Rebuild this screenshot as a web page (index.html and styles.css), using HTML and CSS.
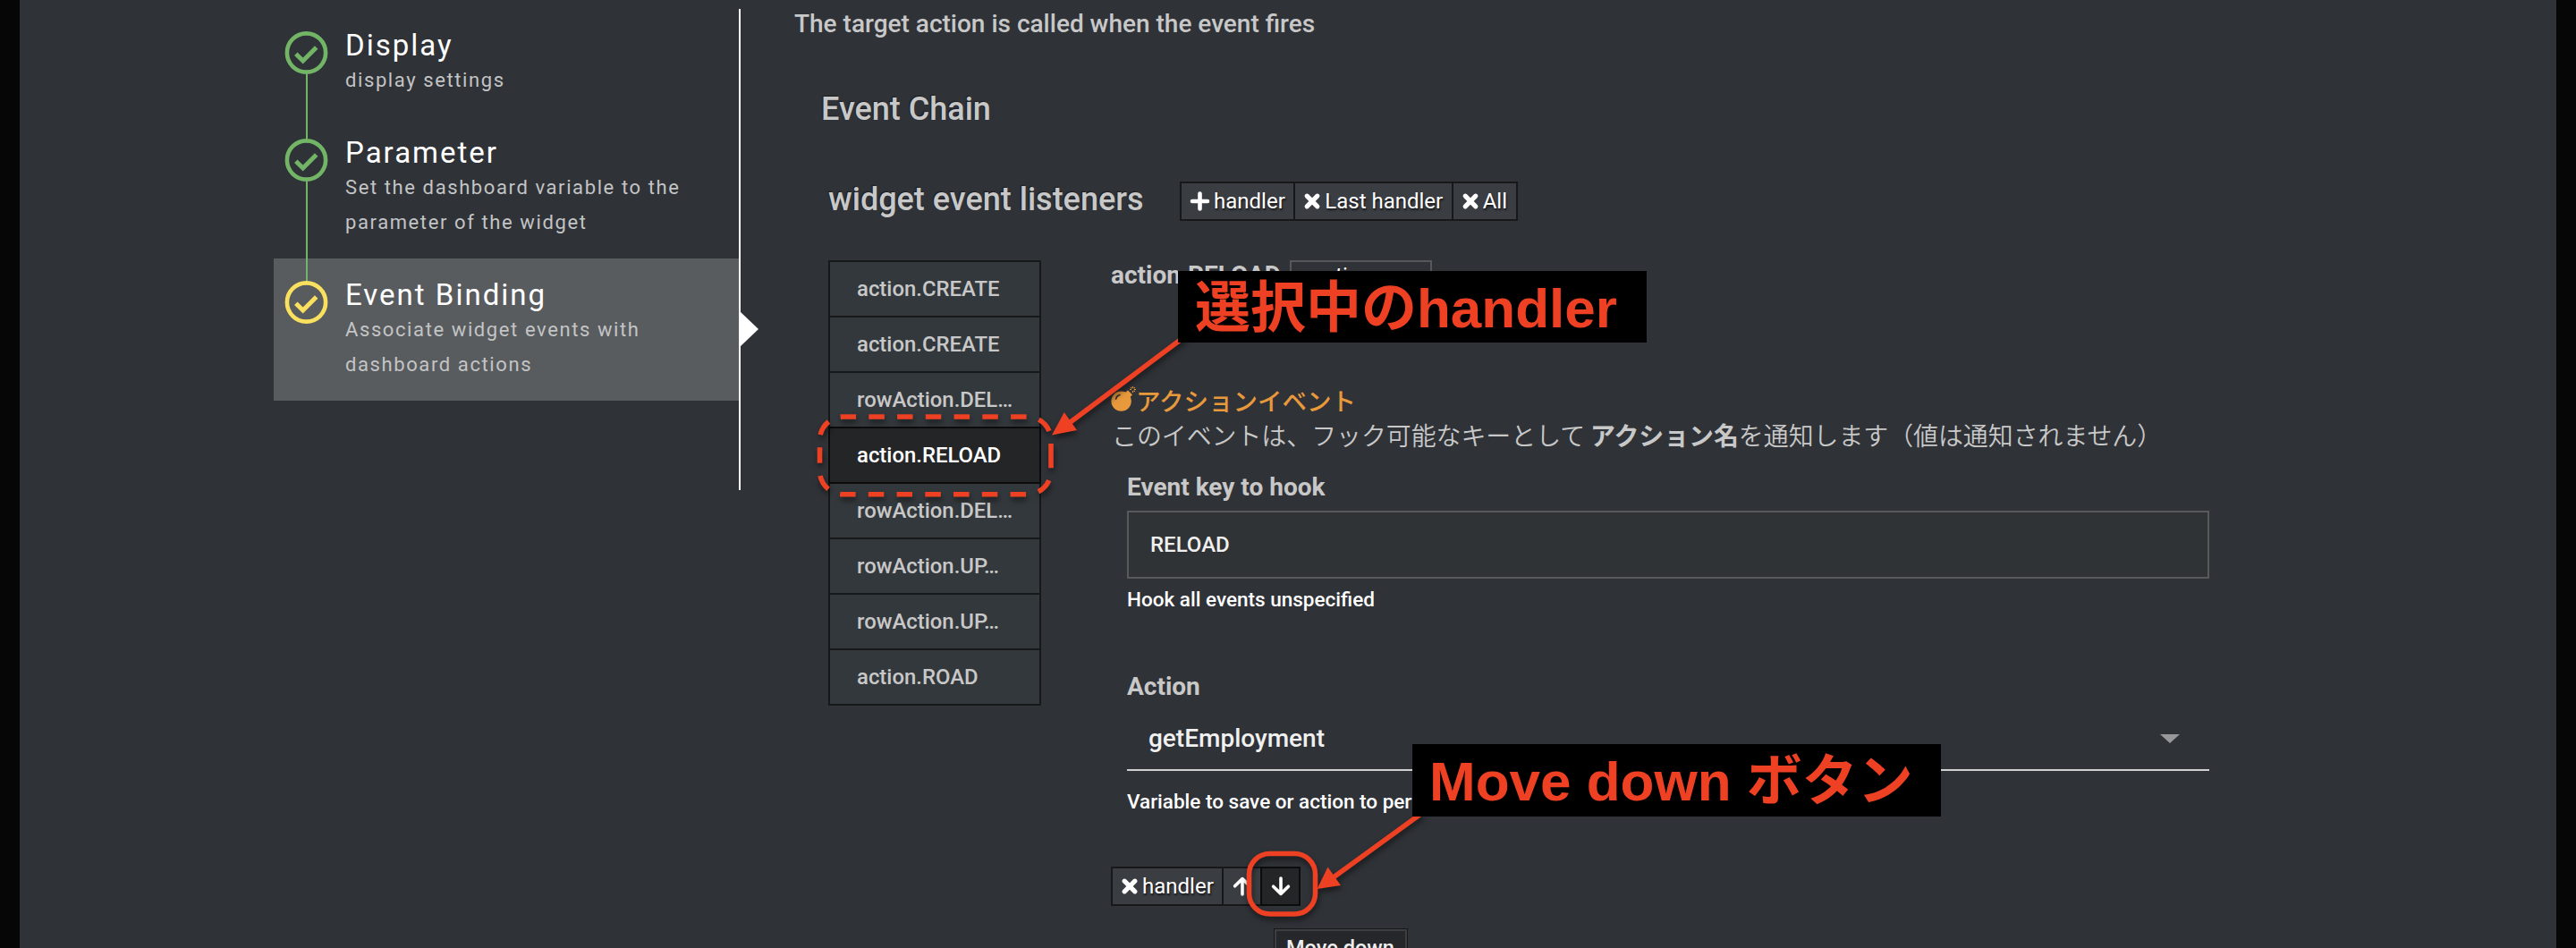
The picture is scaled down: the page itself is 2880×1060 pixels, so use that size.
FILE: index.html
```html
<!DOCTYPE html>
<html lang="ja">
<head>
  <meta charset="UTF-8" />
  <meta name="viewport" content="width=device-width, initial-scale=1.0" />
  <title>Event Binding</title>
  <link rel="stylesheet" href="styles.css">
</head>
<body>
  <svg class="symbols" aria-hidden="true">
    <symbol id="i-check" viewBox="0 0 48 48">
      <circle cx="24" cy="24" r="21.6" fill="none" stroke="currentColor" stroke-width="4.6" />
      <path d="M12.3 25.2 L20.2 33 L35.2 18" fill="none" stroke="currentColor" stroke-width="5" />
    </symbol>
    <symbol id="i-plus" viewBox="0 0 22 22">
      <path d="M11 2.5V19.5M2.5 11H19.5" stroke="currentColor" stroke-width="4.6" stroke-linecap="round" />
    </symbol>
    <symbol id="i-cross" viewBox="0 0 20 20">
      <path d="M4.2 4.2L15.8 15.8M15.8 4.2L4.2 15.8" stroke="currentColor" stroke-width="5.2" stroke-linecap="round" />
    </symbol>
    <symbol id="i-down" viewBox="0 0 22 22">
      <path d="M11 2V19M2.6 11.2L11 19.4L19.4 11.2" fill="none" stroke="currentColor" stroke-width="3.6" stroke-linecap="round" stroke-linejoin="round" />
    </symbol>
    <symbol id="i-bomb" viewBox="0 0 28 28">
      <circle cx="11.6" cy="16.6" r="11.2" fill="currentColor" />
      <path d="M15.5 7.5L19 4.2L24 9.4L20.6 12.8Z" fill="currentColor" />
      <path d="M5.6 14.2Q6.4 10.6 10 9.6" fill="none" stroke="#2f3237" stroke-width="1.6" stroke-linecap="round" />
      <path d="M24.4 0V2M24.4 5V7M21 3.5H23M26 3.5H28M22 1.1L23.2 2.3M26.8 1.1L25.6 2.3M26.8 5.9L25.6 4.7" stroke="currentColor" stroke-width="1.1" />
    </symbol>
  </svg>

  <div class="panel">
    <aside class="steps">
      <div class="step done">
        <svg class="step-icon"><use href="#i-check" /></svg>
        <div class="step-body">
          <div class="step-title">Display</div>
          <div class="step-desc">display settings</div>
        </div>
      </div>
      <div class="step done">
        <svg class="step-icon"><use href="#i-check" /></svg>
        <div class="step-body">
          <div class="step-title">Parameter</div>
          <div class="step-desc">Set the dashboard variable to the parameter of the widget</div>
        </div>
      </div>
      <div class="step active">
        <svg class="step-icon"><use href="#i-check" /></svg>
        <div class="step-body">
          <div class="step-title">Event Binding</div>
          <div class="step-desc">Associate widget events with dashboard actions</div>
        </div>
      </div>
    </aside>

    <main>
      <p class="lead">The target action is called when the event fires</p>
      <h2>Event Chain</h2>

      <div class="listeners-head">
        <h3>widget event listeners</h3>
        <div class="buttons">
          <button><svg class="plus"><use href="#i-plus" /></svg>handler</button>
          <button><svg><use href="#i-cross" /></svg>Last handler</button>
          <button><svg><use href="#i-cross" /></svg>All</button>
        </div>
      </div>

      <div class="columns">
        <ul class="handlers">
          <li>action.CREATE</li>
          <li>action.CREATE</li>
          <li>rowAction.DEL…</li>
          <li class="selected">action.RELOAD</li>
          <li>rowAction.DEL…</li>
          <li>rowAction.UP…</li>
          <li>rowAction.UP…</li>
          <li>action.ROAD</li>
        </ul>

        <section class="detail">
          <div class="detail-head">
            <strong>action.RELOAD</strong>
            <span class="tag">action</span>
          </div>

          <div class="help-title"><svg><use href="#i-bomb" /></svg>アクションイベント</div>
          <p class="help">このイベントは、フック可能なキーとして <b>アクション名</b>を通知します（値は通知されません）</p>

          <div class="form">
            <label>Event key to hook</label>
            <div class="input">RELOAD</div>
            <div class="hint">Hook all events unspecified</div>
            <label class="action-label">Action</label>
            <div class="select">getEmployment<i class="caret"></i></div>
            <div class="hint action-hint">Variable to save or action to perform</div>
          </div>

          <div class="buttons move">
            <button><svg><use href="#i-cross" /></svg>handler</button>
            <button class="icon"><svg class="up"><use href="#i-down" /></svg></button>
            <button class="icon pressed"><svg><use href="#i-down" /></svg></button>
            <span class="tooltip">Move down</span>
          </div>
        </section>
      </div>
    </main>
  </div>

  <!-- annotations -->
  <svg class="marks" viewBox="0 0 2880 1060">
    <g fill="none" stroke="#ee4023" stroke-width="5.6">
      <path d="M1175 513.5V492A26 26 0 0 0 1149 466H942.5A26 26 0 0 0 916.5 492V526.7A26 26 0 0 0 942.5 552.7H1149A26 26 0 0 0 1175 526.7V513.5" stroke-dasharray="17.5 14.25" />
      <rect x="1396.5" y="954.5" width="74" height="67.5" rx="23" />
      <path d="M1325 376L1194 474M1590 909L1488 983" />
    </g>
    <g fill="#ee4023">
      <path d="M1176 486.5L1189.8 461L1204 481Z" />
      <path d="M1472.5 994L1484.5 969.5L1499 990Z" />
    </g>
  </svg>
  <div class="note note-handler">選択中のhandler</div>
  <div class="note note-move">Move down ボタン</div>
</body>
</html>
```

FILE: styles.css
```css
* {
  box-sizing: border-box;
}

body {
  margin: 0;
  background-color: #060606;
  color: #c8c8c8;
  font-family: Roboto, "Noto Sans CJK JP", sans-serif;
  position: relative;
  height: 1060px;
  overflow: hidden;
}

h2, h3, p, ul {
  margin: 0;
  padding: 0;
}

.symbols {
  display: none;
}

.panel {
  display: flex;
  height: 1060px;
  margin: 0 22px;
  padding-left: 284px;
  background-color: #2f3237;
}

/* steps */
.steps {
  width: 522px;
  height: 538px;
  margin-top: 10px;
  border-right: 2px solid #fff;
}

.step {
  position: relative;
  display: flex;
  gap: 19px;
  padding: 21px 40px 21px 12px;
  letter-spacing: 1.6px;
}

.step-icon {
  width: 49px;
  height: 48px;
  margin-top: 4px;
  flex: none;
}

.step.done {
  color: #72b566;
}

.step.done::after {
  content: "";
  position: absolute;
  left: 36px;
  top: 73px;
  bottom: -25px;
  width: 2px;
  background-color: #72b566;
  z-index: 1;
}

.step-title {
  color: #fff;
  font-size: 33px;
  line-height: 39px;
  letter-spacing: 2px;
}

.step-desc {
  color: #c3c4c5;
  font-size: 22px;
  line-height: 39px;
}

.step.active {
  background-color: #595c5f;
  color: #fae05f;
}

.step.active::after {
  content: "";
  position: absolute;
  left: 521px;
  top: 59px;
  border: 20px solid transparent;
  border-left: 21px solid #fff;
  border-right: 0;
}

/* content */
main {
  padding-left: 60px;
}

.lead {
  padding-top: 1px;
  font-size: 28px;
  font-weight: 500;
  line-height: 52px;
}

h2, h3 {
  font-size: 36px;
  font-weight: 500;
  line-height: 50px;
  text-shadow: -1px -1px 1px #1c1d1f;
}

h2 {
  margin: 44px 0 0 30px;
}

.listeners-head {
  display: flex;
  align-items: center;
  height: 50px;
  margin: 53px 0 0 38px;
}

h3 {
  margin-top: -4px;
  width: 393px;
}

.buttons {
  display: flex;
  position: relative;
}

button {
  display: flex;
  align-items: center;
  gap: 4px;
  height: 44px;
  padding: 0 9.5px 0 9px;
  border: 2px solid #17181a;
  background-color: #3a3d42;
  color: #fff;
  font: 24px Roboto, sans-serif;
  text-shadow: 1px 2px 2px #17181a;
}

button + button {
  margin-left: -2px;
}

button svg {
  width: 20px;
  height: 20px;
}

button svg.plus {
  width: 23px;
  height: 22px;
}

.columns {
  display: flex;
  margin: 41px 0 0 38px;
}

.handlers {
  width: 238px;
  list-style: none;
  font-size: 23.9px;
  font-weight: 500;
}

.handlers li {
  height: 64px;
  margin-bottom: -2px;
  padding-left: 30px;
  border: 2px solid #17181a;
  background-color: #33383c;
  line-height: 60px;
}

.handlers .selected {
  position: relative;
  background-color: #242527;
  border-color: #0c0c0d;
  color: #fff;
}

.detail {
  margin-left: 78px;
}

.detail-head {
  display: flex;
  gap: 10px;
  height: 136px;
  font-size: 28px;
  line-height: 34px;
}

.tag {
  width: 159px;
  height: 40px;
  padding-left: 23px;
  border: 2px solid #55575a;
  color: #fff;
  font-size: 24px;
  font-style: italic;
  line-height: 30px;
}

.help-title {
  display: flex;
  align-items: center;
  height: 40px;
  color: #e8993c;
  font-size: 27.5px;
  font-weight: 500;
}

.help-title svg {
  width: 28px;
  height: 28px;
  margin-top: -3px;
}

.help {
  padding: 2px 0 0 1px;
  font-size: 27.9px;
  font-weight: 350;
  line-height: 40px;
  white-space: nowrap;
}

.help b {
  margin-left: -1px;
}

.form {
  width: 1210px;
  margin: 15px 0 0 18px;
}

label {
  display: block;
  padding-top: 1px;
  font-size: 28px;
  font-weight: 700;
  line-height: 40px;
}

.input {
  height: 76px;
  margin-top: 6px;
  padding-left: 24px;
  border: 2px solid #58595a;
  background-color: #2f3335;
  color: #f0f0f0;
  font-size: 24px;
  font-weight: 500;
  line-height: 73px;
}

.hint {
  margin-top: 5px;
  color: #fff;
  font-size: 22.5px;
  font-weight: 500;
  line-height: 36px;
}

.action-label {
  margin-top: 59px;
}

.select {
  display: flex;
  justify-content: space-between;
  align-items: center;
  height: 74px;
  padding: 3px 33px 0 24px;
  border-bottom: 2px solid #d0d0d0;
  color: #f0f0f0;
  font-size: 28px;
  font-weight: 500;
}

.caret {
  border: 11px solid transparent;
  border-top: 10px solid #96989a;
  border-bottom: 0;
}

.action-hint {
  margin-top: 16px;
}

.move {
  width: max-content;
  margin-top: 55px;
}

.icon {
  width: 45px;
  justify-content: center;
  padding: 0;
}

.icon svg {
  width: 22px;
  height: 22px;
}

.up {
  transform: rotate(180deg);
}

.pressed {
  background-color: #242527;
  border-color: #0c0c0d;
}

.tooltip {
  position: absolute;
  left: 183px;
  top: 70px;
  width: 148px;
  height: 50px;
  padding-left: 11px;
  border: 2px solid #3c3e41;
  outline: 1px solid #17181a;
  background-color: #26272a;
  color: #eee;
  font-size: 23.5px;
  font-weight: 500;
  line-height: 38px;
}

/* annotations */
.marks {
  position: absolute;
  left: 0;
  top: 0;
  width: 2880px;
  height: 1060px;
  filter: drop-shadow(1px 4px 3px rgba(0, 0, 0, 0.5));
}

.note {
  position: absolute;
  padding-left: 19px;
  background-color: #000;
  color: #ee4023;
  font: bold 62px "Liberation Sans", "Noto Sans CJK JP", sans-serif;
  white-space: nowrap;
}

.note-handler {
  left: 1317px;
  top: 303px;
  width: 524px;
  height: 80px;
  line-height: 83px;
}

.note-move {
  left: 1579px;
  top: 832px;
  width: 591px;
  height: 81px;
  line-height: 84px;
}
```
